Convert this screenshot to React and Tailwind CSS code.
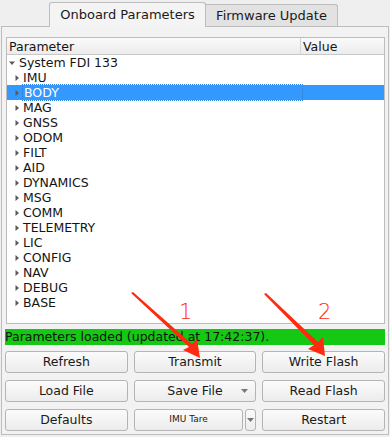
import React from 'react';

const items = ['IMU', 'BODY', 'MAG', 'GNSS', 'ODOM', 'FILT', 'AID', 'DYNAMICS', 'MSG', 'COMM', 'TELEMETRY', 'LIC', 'CONFIG', 'NAV', 'DEBUG', 'BASE'];

const Caret = ({ open }) => (
  <svg width="6" height="6" viewBox="0 0 6 6" className="shrink-0">
    {open ? <path d="M0 1.5 L6 1.5 L3 5 Z" fill="#5a5a5a" /> : <path d="M1.5 0 L5 3 L1.5 6 Z" fill="#5a5a5a" />}
  </svg>
);

const Btn = ({ children, className = '', small }) => (
  <button
    className={`h-[22px] rounded-[3px] border border-[#b4b4b4] bg-gradient-to-b from-[#fbfbfb] to-[#ececec] text-[#1a1a1a] ${small ? 'text-[9px]' : 'text-[12.5px]'} ${className}`}
  >
    {children}
  </button>
);

const DropTri = () => (
  <svg width="7" height="4" viewBox="0 0 7 4"><path d="M0 0 L7 0 L3.5 4 Z" fill="#777" /></svg>
);

export default function App() {
  return (
    <div className="relative w-[390px] h-[437px] bg-[#efefef] overflow-hidden" style={{ fontFamily: '"DejaVu Sans", Verdana, sans-serif' }}>
      {/* tabs */}
      <div className="flex items-end pl-[49px] h-[26px] pt-[1px]">
        <div className="w-[157px] h-[25px] border border-b-0 border-[#bdbdbd] rounded-t-[3px] bg-[#f4f4f4] flex items-center justify-center text-[13px] text-[#1a1a1a] relative z-10 -mb-px">
          Onboard Parameters
        </div>
        <div className="w-[132px] h-[22px] border border-l-0 border-b-0 border-[#bdbdbd] rounded-tr-[3px] bg-[#e2e2e2] flex items-center justify-center text-[13px] text-[#1a1a1a]">
          Firmware Update
        </div>
      </div>

      {/* pane */}
      <div className="mx-[1px] w-[388px] h-[409px] border border-[#bdbdbd] bg-[#f2f2f2] px-[4px] pt-[10px]">
        {/* tree */}
        <div className="w-[379px] h-[287px] border border-[#bdbdbd] bg-white text-[12.5px] text-[#141414] leading-[15px]">
          <div className="flex h-[17px] border-b border-[#c8c8c8] bg-gradient-to-b from-[#fafafa] to-[#ececec]">
            <div className="w-[294px] border-r border-[#d4d4d4] pl-[2px] flex items-center">Parameter</div>
            <div className="flex-1 pl-[2px] flex items-center">Value</div>
          </div>
          <div className="flex items-center h-[15px] pl-[2px] gap-[4px]">
            <Caret open />
            <span>System FDI 133</span>
          </div>
          {items.map((name) => {
            const sel = name === 'BODY';
            return (
              <div key={name} className={`flex items-center h-[15px] pl-[7px] ${sel ? 'bg-[#3399ff] text-white' : ''}`}>
                <Caret />
                <span className={`ml-[2px] pl-[1px] ${sel ? 'w-[281px] border border-dotted border-[#2a7fd6]' : ''}`}>{name}</span>
              </div>
            );
          })}
        </div>

        {/* status */}
        <div className="mt-[5px] w-[380px] h-[16px] bg-[#14c814] text-[12.5px] leading-[16px] text-[#111] -ml-px">
          Parameters loaded (updated at 17:42:37).
        </div>

        {/* buttons */}
        <div className="mt-[6px] grid grid-cols-3 gap-x-[6px] gap-y-[7px] w-[380px] -ml-px">
          <Btn>Refresh</Btn>
          <Btn>Transmit</Btn>
          <Btn>Write Flash</Btn>
          <Btn>Load File</Btn>
          <Btn className="relative">
            Save File
            <span className="absolute right-[7px] top-[8px] flex"><DropTri /></span>
          </Btn>
          <Btn>Read Flash</Btn>
          <Btn>Defaults</Btn>
          <div className="flex gap-[2px]">
            <Btn small className="flex-1">IMU Tare</Btn>
            <Btn className="w-[11px] flex items-center justify-center"><DropTri /></Btn>
          </div>
          <Btn>Restart</Btn>
        </div>
      </div>

      {/* annotation arrows */}
      <svg className="absolute left-0 top-0 pointer-events-none" width="390" height="437">
        <path d="M131 293 L133 292 L192 344 L197 339 L200 358 L183 350 L189 347 Z" fill="#ff2a12" />
        <path d="M264 294 L266 293 L318 342 L323 337 L325 356 L308 349 L314 345 Z" fill="#ff2a12" />
      </svg>
      <div className="absolute left-[179px] top-[302px] text-[21px] leading-none text-[#ff2a12]" style={{ fontFamily: '"DejaVu Sans", sans-serif', fontWeight: 300 }}>1</div>
      <div className="absolute left-[318px] top-[302px] text-[21px] leading-none text-[#ff2a12]" style={{ fontFamily: '"DejaVu Sans", sans-serif', fontWeight: 300 }}>2</div>
    </div>
  );
}
